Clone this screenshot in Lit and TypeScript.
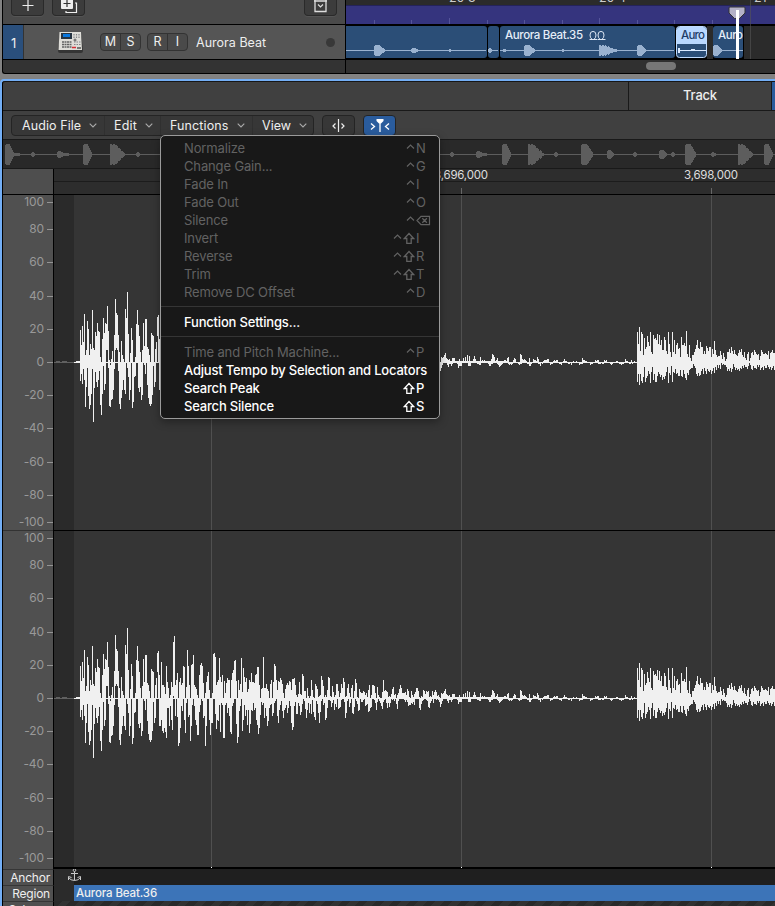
import { LitElement, html, svg, css } from "lit";
import { customElement } from "lit/decorators.js";

// Peak pairs (above, below the axis) for consecutive pixel columns.
const HIT_A = `32,19 17,12 36,22 20,7 48,18 7,45 12,25 41,6 33,34 7,47 18,43 13,32 52,7 14,60 12,26 30,10 26,20 39,25 31,18 30,9 5,43 -1,53 23,32 44,4 29,28 39,22 38,-12 56,-12 31,6 2,44
-3,45 3,38 11,37 0,28 27,7 63,-12 49,-14 47,-12 27,9 10,42 -1,47 21,36 7,28 3,18 0,28 53,32 44,0 70,6 28,15 0,38 9,28 34,0 22,46 0,40 0,15 5,14 38,0 52,0 37,26 26,30
10,25 0,38 12,33 39,1 16,3 43,12 43,1 15,23 13,36 7,42 0,44 29,42 27,33 26,4 -1,25 13,20 20,1 45,-26 47,0 23,28 -1,28 36,22 13,33 13,35 11,30 4,34 32,40 16,10 10,10 0,28
3,8 16,22 11,32 56,-2 62,0 13,18 18,1 25,19 -1,48 16,45 20,30 13,8 15,13 32,1 31,22 0,35 11,5 48,0 32,19 13,17 0,43 33,28 34,7 43,1 13,8 11,22 9,27 3,37 -1,37 23,14
33,7 35,0 32,3 15,20 -1,18 5,48 16,28 22,0 26,1 8,22 -1,37 0,25 5,25 44,1 45,0 41,16 13,31 16,22 18,23 40,7 21,34 16,5 23,7 0,40 17,40 5,7 15,5 20,15 18,10 18,18
0,34 18,36 25,8 28,5 37,1 38,1 17,26 0,45 18,39 8,13 14,8 40,1 6,33 30,22 21,7 16,18 20,12 6,27 9,12 18,35 16,26 25,12 16,13 16,5 15,12 23,10 24,22 31,27 31,36 13,30
0,17 9,4 10,7 41,5 10,20 10,10 14,18 9,28 7,23 0,10 14,7 18,6 0,18 16,15 34,5 32,3 18,1 8,18 17,25 16,12 20,7 18,3 14,13 5,20 0,12 9,10 13,7 15,15 13,10 17,3 16,8
8,25 19,32 19,29 20,8 13,4 3,16 1,16 4,5 16,8 4,17 3,14 24,6 22,0 7,3 7,11 0,20 10,12 2,5 0,15 2,6 18,16 8,2 1,14 0,19 14,22 12,3 9,6 1,15 2,25 3,14
22,3 18,0 12,7 1,5 3,22 1,20 8,10 21,2 20,2 2,3 1,9 12,5 6,2 1,12 3,6 14,9 14,0 7,11 1,10 5,9 14,2 10,0 20,0 16,4 1,20 2,15 10,3 14,0 5,9 1,5
10,1 13,15 0,16 7,9 19,0 15,3 1,6 0,13 9,12 6,0 5,4 5,4 7,2 6,1 3,8 5,7 1,6 8,14 13,13 0,10 3,9 13,1 13,0 12,2 5,5 0,12 11,4 3,0 1,3 0,5
0,8 6,11 18,4 7,2 8,0 7,5 6,10 1,5 2,9 1,5 4,0 9,2 11,0 3,3 4,0 0,6 3,11 5,3 9,1 13,0 10,0 5,0 5,1 5,2 6,4 3,2 9,4 7,8 1,7 0,7
7,5 3,6 1,4 4,7 6,1 10,0 10,1 7,0 1,10 0,12 2,6 1,3 8,2 7,0 4,0 7,2 6,3 7,9 1,10 2,5 1,3 7,1 3,5 6,1 8,0 6,2 2,1 3,2 1,4 0,9
5,6 4,3 5,0 7,0 9,0 4,1 3,3 2,5 3,2 1,2`;

const HIT_B = `30,20 18,12 35,23 11,12 30,19 28,21 7,15 24,5 13,20 15,16 26,14 20,9 16,12 30,21 10,10 8,5 27,18 23,12 24,20 22,20 28,14 18,10 27,12 17,15 22,13 12,18 12,15 25,17 22,14 11,10
8,5 30,21 18,11 10,13 5,4 30,20 10,10 22,11 8,7 17,12 19,11 13,14 14,14 5,8 25,14 17,15 17,8 19,12 16,16 31,18 8,11 5,13 17,8 4,7 1,6 7,6 7,2 10,4 13,6 17,12
22,14 14,11 13,14 20,13 15,9 15,7 8,12 11,6 8,9 16,12 14,7 11,9 15,10 15,8 5,12 13,9 8,6 21,11 12,5 7,8 5,3 6,6 6,3 11,7 7,1 3,3 9,2 5,3 1,3 3,5
10,9 10,7 13,9 9,6 15,10 11,7 8,2 12,5 8,8 7,6 6,8 9,7 12,9 10,6 13,7 7,4 5,6 10,3 4,5 2,5 8,7 10,4 1,1 4,3 9,7 10,8 7,4 12,6 10,6 8,7
7,3 8,5 2,3 6,8 12,6 10,5 8,8 8,4 9,6 8,6 7,3 11,5 3,7 9,5 10,8 12,6 9,4 9,8`;

type Peak = [number, number];
const parse = (s: string): Peak[] => s.trim().split(/\s+/).map((p) => p.split(",").map(Number) as Peak);

// Small bumps standing out of the quiet tail: offset in columns -> height.
const BUMPS: Record<number, number> = {
  2: 4, 8: 3, 14: 5, 16: 7, 18: 6, 23: 6, 29: 5, 40: 3, 41: 8, 42: 7, 43: 5, 46: 4, 56: 4, 57: 5, 63: 4, 64: 3,
  69: 8, 70: 7, 71: 3, 78: 4, 82: 3, 86: 5, 87: 3, 96: 3, 97: 3, 106: 2, 113: 3, 131: 4, 132: 2, 146: 2, 147: 2, 153: 2, 174: 3, 180: 2,
};

// Quiet tail between the two hits: small swings to either side of the axis.
function tail(n: number): Peak[] {
  const out: Peak[] = [];
  for (let i = 0; i < n; i++) {
    const env = 0.8 + 3.6 * Math.exp(-i / 75);
    const r = Math.abs(Math.sin(i * 12.9898) * 43758.5453) % 1;
    const v = Math.sin(i * 0.62) * 0.8 + (r - 0.5) * 1.1;
    out.push([
      Math.max(BUMPS[i] ?? 0, Math.round(Math.max(v, 0.2) * env)),
      Math.round(Math.max(-v, 0.1) * env * 1.15) + 1,
    ]);
  }
  return out;
}

const TAIL_START = 80 + parse(HIT_A).length;
const PEAKS: Peak[] = [...parse(HIT_A), ...tail(637 - TAIL_START), ...parse(HIT_B)];

const wavePath = (c: number) =>
  PEAKS.map(([a, b], i) => `M${26 + i} ${c - a}h1V${c + Math.max(b, -a + 1)}h-1z`).join("");

// Transient shape: quick attack, full body, tapering decay; long ones decay from early on.
function burst(x: number, c: number, w: number, h: number): string {
  const long = w > 13;
  const hold = long ? 0.3 : 0.45;
  let d = "";
  for (let i = 0; i < w; i++) {
    const t = i / w;
    const body = t < hold ? 1 : (1 - t) / (1 - hold);
    const a = Math.max(1, Math.round(h * body - (i === 0 && !long ? 1 : 0) - (long && i % 3 === 2 ? 1 : 0)));
    d += `M${x + i} ${c - a}h1V${c + a + 1}h-1z`;
  }
  return d;
}

const OVERVIEW: [number, number, number][] = [
  [2, 9, 10], [11, 6, 1], [28, 4, 2], [54, 7, 3], [61, 5, 1], [80, 9, 10], [107, 15, 10], [133, 4, 2],
  [447, 4, 2], [473, 7, 3], [480, 4, 1], [499, 9, 10], [525, 16, 10], [551, 4, 2], [578, 12, 10], [604, 7, 4],
  [630, 4, 2], [656, 8, 4], [668, 4, 2], [682, 11, 10], [708, 5, 2], [735, 15, 10], [761, 9, 10],
];

const SCALE: [string, number][] = [
  ["100", 0], ["80", 13], ["60", 19], ["40", 20], ["20", 19], ["0", 19],
  ["-20", 19], ["-40", 19], ["-60", 20], ["-80", 19], ["-100", 13],
];

const chevron = html`<svg class="chev" width="8" height="5" viewBox="0 0 8 5"><path d="M.7.7 4 4 7.3.7" fill="none" stroke="#aaa" stroke-width="1.1"/></svg>`;
const caret = html`<svg class="caret" width="9" height="13" viewBox="0 0 9 13"><path d="M1 6.5 4.5 3 8 6.500" fill="none" stroke="currentColor" stroke-width="1.2"/></svg>`;
const shift = html`<svg class="shift" width="12" height="13" viewBox="0 0 12 13"><path d="M6 1.500 1.300 6.500H3.800V11.400H8.200V6.500H10.700Z" fill="none" stroke="currentColor" stroke-width="1.300"/></svg>`;
const erase = html`<svg width="15" height="13" viewBox="0 0 15 13"><path d="M5 2.3H13.5V10.7H5L1 6.5ZM6.3 4.3l4.6 4.5m0-4.5L6.3 8.8" fill="none" stroke="currentColor" stroke-width="1.2"/></svg>`;

interface Item { label: string; key?: string; ctrl?: boolean; shift?: boolean; on?: boolean; sep?: boolean }
const MENU: Item[] = [
  { label: "Normalize", key: "N", ctrl: true },
  { label: "Change Gain...", key: "G", ctrl: true },
  { label: "Fade In", key: "I", ctrl: true },
  { label: "Fade Out", key: "O", ctrl: true },
  { label: "Silence", key: "erase", ctrl: true },
  { label: "Invert", key: "I", ctrl: true, shift: true },
  { label: "Reverse", key: "R", ctrl: true, shift: true },
  { label: "Trim", key: "T", ctrl: true, shift: true },
  { label: "Remove DC Offset", key: "D", ctrl: true },
  { label: "", sep: true },
  { label: "Function Settings...", on: true },
  { label: "", sep: true },
  { label: "Time and Pitch Machine...", key: "P", ctrl: true },
  { label: "Adjust Tempo by Selection and Locators", on: true },
  { label: "Search Peak", key: "P", shift: true, on: true },
  { label: "Search Silence", key: "S", shift: true, on: true },
];

@customElement("functions-menu")
class FunctionsMenu extends LitElement {
  static styles = css`
    :host { display: block; box-sizing: border-box; width: 280px; height: 284px; padding-top: 3px; background: #181818;
      border: 1px solid #9a9a9a; border-radius: 5px; box-shadow: 0 3px 9px rgba(0,0,0,.35);
      font: 13px/18px Inter, "Liberation Sans", sans-serif; color: #626262; letter-spacing: -0.14px; }
    svg { display: block; flex: none; }
    .item { display: flex; height: 18px; padding: 0 8px 0 23px; white-space: nowrap; align-items: center; }
    .label { flex: 1; min-width: 0; }
    .on { color: #fff; font-weight: 500; letter-spacing: -0.19px; }
    .keys { display: flex; align-items: center; }
    .caret { margin-right: 1px; }
    .shift { margin-right: 1px; }
    .key { width: 15px; display: flex; }
    .sep { box-sizing: border-box; height: 12px; display: flex; align-items: flex-start; padding-top: 5px; }
    .sep::before { content: ""; flex: 1; height: 1px; background: #353535; }
  `;
  render() {
    return MENU.map((m) => m.sep
      ? html`<div class="sep"></div>`
      : html`<div class="item ${m.on ? "on" : ""}"><span class="label">${m.label}</span>
          ${m.key ? html`<span class="keys">${m.ctrl ? caret : ""}${m.shift ? shift : ""}<span class="key">${m.key === "erase" ? erase : m.key}</span></span>` : ""}
        </div>`);
  }
}

@customElement("app-root")
class AppRoot extends LitElement {
  static styles = css`
    :host { display: block; position: relative; width: 775px; height: 906px; overflow: hidden; background: #828282;
      font: 13px/16px Inter, "Liberation Sans", sans-serif; color: #eee; }
    * { box-sizing: border-box; }
    svg { display: block; flex: none; }
    .arrange { display: flex; height: 74px; margin-left: 2px; border-left: 1px solid #000; border-bottom: 1px solid #000; border-bottom-left-radius: 3px; background: #333; overflow: hidden; }
    .heads { width: 343px; border-right: 1px solid #000; }
    .tools { height: 24px; background: #4a4a4a; display: flex; align-items: flex-start; padding: 0 8px; }
    .tool { width: 33px; height: 16px; background: #3c3c3c; border: 1px solid #2a2a2a; border-top: 0; border-radius: 0 0 4px 4px; display: flex; justify-content: center; margin-right: 8px; box-shadow: 0 1px 0 #555; }
    .tool.last { margin: 0 0 0 auto; }
    .track { height: 36px; border-top: 1px solid #000; border-bottom: 1px solid #000; background: #555; display: flex; align-items: center; }
    .num { width: 21px; height: 34px; line-height: 36px; padding-left: 8px; background: #2a4f7c; border-right: 1px solid #333; }
    .inst { margin-left: 33px; }
    .pair { display: flex; height: 18px; width: 41px; border: 1px solid #333; border-radius: 4px; background: #4a4a4a; font-size: 12.5px; line-height: 16px; text-align: center; margin-left: 6px; }
    .pair.first { margin-left: 16px; }
    .pair span { flex: 1; }
    .pair span + span { border-left: 1px solid #333; }
    .name { margin-left: 8px; flex: 1; font-size: 12.5px; line-height: 18px; padding-top: 1px; letter-spacing: 0.02px; }
    .dot { width: 9px; height: 9px; border-radius: 50%; background: #383838; margin-right: 10px; }
    .lanes { flex: 1; }
    .editor { margin-top: 5px; height: 827px; border: 2px solid #73aef5; border-right: 0; border-bottom: 0; border-top-left-radius: 4px; background: #404040; }
    .inner { border-left: 1px solid #000; border-top: 1px solid #161616; height: 825px; border-top-left-radius: 3px; }
    .tabs { display: flex; height: 29px; justify-content: flex-end; border-bottom: 1px solid #191919; font-weight: 500; letter-spacing: -0.2px; }
    .tab { width: 144px; border: 1px solid #191919; border-width: 0 1px; line-height: 27px; text-align: center; }
    .tab.blue { width: 3px; border: 0; background: #2a5c9d; }
    .bar { display: flex; height: 29px; padding: 4px 8px 0; border-bottom: 1px solid #191919; }
    .menus { display: flex; width: 303px; height: 21px; background: #373737; border: 1px solid #242424; border-radius: 4px; font-size: 12.5px; line-height: 20px; }
    .m { display: flex; align-items: center; justify-content: space-between; padding: 0 8px 0 10px; border-left: 1px solid #303030; letter-spacing: 0.03px; }
    .m:first-child { border-left: 0; }
    .w1 { width: 92px; letter-spacing: 0.08px; padding-right: 7px; } .w2 { width: 56px; padding: 0 7px 0 9px; letter-spacing: 0.2px; } .w3 { width: 92px; padding: 0 7px 0 9px; letter-spacing: 0.12px; } .w4 { width: 61px; padding: 0 6px 0 9px; letter-spacing: 0.05px; }
    .btn { width: 33px; height: 21px; margin-left: 8px; background: #373737; border: 1px solid #242424; border-radius: 4px; display: flex; align-items: center; justify-content: center; }
    .btn.blue { background: #2a5c9d; }
    .overview { height: 29px; background: #292929; border-bottom: 1px solid #191919; }
    .ruler { display: flex; height: 26px; border-bottom: 1px solid #000; }
    .corner { width: 51px; background: #4e4e4e; border-right: 1px solid #000; }
    .time { flex: 1; background: linear-gradient(#2d2d2d 0 12px, #1c1c1c 12px 13px, #2d2d2d 13px); }
    .body { display: flex; height: 674px; }
    .scale { width: 51px; border-right: 1px solid #000; background: #505050; color: #999; font-size: 12px; letter-spacing: -0.1px; }
    .chan { height: 336px; overflow: hidden; }
    .chan:first-child { border-bottom: 1px solid #333; }
    .mark { display: flex; height: 14px; line-height: 14px; align-items: center; justify-content: flex-end; }
    .mark::after { content: ""; width: 6px; height: 1px; background: #949494; margin-left: 3px; }
    .row { display: flex; height: 16px; font-size: 12px; line-height: 16px; }
    .lab { width: 51px; padding-right: 3px; text-align: right; background: #505050; border-right: 1px solid #000; border-top: 1px solid #363636; white-space: nowrap; letter-spacing: -0.22px; line-height: 15px; }
    .pre { width: 20px; background: #2b2b2b; }
    .fill { flex: 1; background: #1d1d1d; }
    .fill.region { background: #3c74b8; font-size: 11.5px; font-weight: 500; letter-spacing: -0.12px; padding-left: 2px; }
    .fill.hatch { background: repeating-linear-gradient(135deg, #292929 0 6px, #323232 6px 12px); }
    .menu { position: absolute; left: 160px; top: 135px; }
  `;

  private region(x: number, w: number) {
    return svg`<rect x=${x} y="26" width=${w} height="32" rx="3" fill="#2b4e77"/>`;
  }

  private lanes() {
    return html`<svg width="429" height="73" viewBox="0 0 429 73" font-family="Inter, sans-serif" font-size="11.5" font-weight="500" fill="#e5edf8">
      <rect width="429" height="73" fill="#2b2b2b"/>
      <g font-size="12.500" font-weight="400" fill="#ccc"><text x="103" y="1.500">20 3</text><text x="253" y="1.500">20 4</text><text x="408" y="1.500">21</text></g>
      <rect y="5" width="429" height="19" fill="#35347e"/><rect y="5" width="429" height="1" fill="#24235a"/>
      <path d="M28.5 20v4M65.5 20v4M103.5 18v6M141.5 20v4M178.5 20v4M216.5 20v4M253.5 18v6M291.5 20v4M328.5 20v4M366.5 20v4" stroke="#55549a"/>
      <rect y="24" width="429" height="2" fill="#000"/><path d="M404.5 0v59" stroke="#555" opacity=".6"/>
      <rect y="26" width="398" height="33" fill="#000"/>
      ${this.region(-5, 146)}${this.region(142, 11)}${this.region(154, 175)}
      <rect x="361" y="26" width="6" height="33" fill="#2b2b2b"/>
      <rect x="330.5" y="26.5" width="30" height="31" rx="3" fill="#2b4e77" stroke="#c0dcff"/>
      <path d="M331 44V30q0-3 3-3h23q3 0 3 3v14z" fill="#b9d8ff"/>
      ${this.region(367, 30)}
      <g fill="#9ab2d0" shape-rendering="crispEdges">
        <path d="M0 50h140v1H0zM143 50h9v1h-9zM154 50h174v1H154zM367 50h30v1h-30z"/>
        <path d=${burst(28, 50, 11, 5) + burst(65, 50, 7, 2) + burst(103, 50, 2, 1) + burst(142, 50, 4, 2) + burst(157, 50, 3, 1) + burst(178, 50, 11, 5) + burst(216, 50, 2, 1) + burst(253, 50, 18, 5) + burst(291, 50, 9, 5) + burst(367, 50, 9, 5)}></path>
      </g>
      <path d="M332 50h28v1h-28zM332 48h2v5h-2zM345 49h4v2h-4z" fill="#dbeaff"/>
      <text x="159" y="39" textLength="78">Aurora Beat.35</text>
      <path d="M243.500 39.500h7.500M246.200 39.500q-2.200-1.500-2.200-4.500a3 3.600 0 0 1 6 0q0 3-2.200 4.500M251.500 39.500h8M254.200 39.500q-2.200-1.500-2.200-4.500a3 3.600 0 0 1 6 0q0 3-2.200 4.500" fill="none" stroke="#dce6f4"/>
      <text x="335" y="39" textLength="24" fill="#1e3c66">Auro</text><text x="372" y="39" textLength="25">Auro</text>
      <rect y="59" width="429" height="1" fill="#000"/><rect y="60" width="429" height="13" fill="#303030"/>
      <rect x="300" y="62" width="30" height="8" rx="4" fill="#777"/>
      <path d="M384 7h14q1 0 1 1v5l-5.500 5.500h-5L383 13V8q0-1 1-1z" fill="#b4b1c8" stroke="#333"/>
      <rect x="390" y="10" width="3" height="49" fill="#fff"/>
    </svg>`;
  }

  private instrument() {
    return html`<svg class="inst" width="27" height="25" viewBox="0 0 27 25">
      <path d="M3 2h21l2 19q0 2-2 2H3q-2 0-2-2z" fill="#343434"/><path d="M2.500 2H24l1 18H1.500z" fill="#deddd8"/>
      <rect x="4" y="3" width="11" height="6" fill="#263442"/><rect x="6" y="4" width="7" height="3" fill="#0877df"/>
      <path d="M5 12h10M5 14.500h10M5 17h10" stroke="#626262" stroke-width="1.700" stroke-dasharray="2 .5"/>
      <path d="M17 4v4M19.500 4v4M22 4v4M17 12h7M17 14.500h7" stroke="#85888a" stroke-width="1.200" stroke-dasharray="1.500 1"/>
      <circle cx="18" cy="10" r="1.500" fill="#777"/><path d="M15 17.500h4" stroke="#d62e35" stroke-width="1.500"/><path d="M20 18h4" stroke="#555" stroke-width="1.500"/>
    </svg>`;
  }

  private wave() {
    return html`<svg width="721" height="674" viewBox="0 0 721 674" shape-rendering="crispEdges">
      <rect width="721" height="674" fill="#353535"/><rect width="20" height="672" fill="#2a2a2a"/>
      <path d="M157.500 0v672M407.500 0v672M657.500 0v672" stroke="#505050"/>
      <path d="M0 167h20v1H0zM0 503h20v1H0zM2 166h4v1H2zM8 166h5v1H8zM2 502h4v1H2zM8 502h5v1H8z" fill="#606060"/>
      <path d="M20 167.500h701M20 503.500h701" stroke="#f0f0f0"/>
      <path d="M22 166h4v2h-4zM22 502h4v2h-4z" fill="#f0f0f0"/>
      <path d=${wavePath(167)} fill="#f0f0f0"></path><path d=${wavePath(503)} fill="#f0f0f0"></path>
      <rect y="335" width="721" height="1" fill="#000"/><rect y="672" width="721" height="2" fill="#000"/>
      <path d="M157 672h1v1h-1zM407 672h1v1h-1zM657 672h1v1h-1z" fill="#fff"/>
    </svg>`;
  }

  private scale() {
    return html`<div class="chan">${SCALE.map(([t, gap]) => html`<div class="mark" style="margin-top:${gap}px">${t}</div>`)}</div>`;
  }

  render() {
    return html`
      <div class="arrange">
        <div class="heads">
          <div class="tools">
            <div class="tool"><svg width="12" height="12" viewBox="0 0 12 12"><path d="M6 0v11M.5 5.500h11" stroke="#eee" stroke-width="1.200"/></svg></div>
            <div class="tool"><svg width="18" height="14" viewBox="0 0 18 14"><rect x="1" y="-2" width="12" height="11" rx="1" fill="#eee"/><path d="M7 0v7M3.500 3.500h7" stroke="#333" stroke-width="1.200"/><path d="M15 3h1.500v9.500H6V11" fill="none" stroke="#eee" stroke-width="1.200"/></svg></div>
            <div class="tool last"><svg width="13" height="13" viewBox="0 0 13 13"><path d="M1 0v11.500h11V0M0 1h13" fill="none" stroke="#ddd" stroke-width="1.300"/><path d="M4 4.500l2.500 2.500L9 4.500" fill="none" stroke="#ddd" stroke-width="1.200"/></svg></div>
          </div>
          <div class="track">
            <div class="num">1</div>${this.instrument()}
            <div class="pair first"><span>M</span><span>S</span></div><div class="pair"><span>R</span><span>I</span></div>
            <div class="name">Aurora Beat</div><div class="dot"></div>
          </div>
        </div>
        <div class="lanes">${this.lanes()}</div>
      </div>
      <div class="editor"><div class="inner">
        <div class="tabs"><div class="tab">Track</div><div class="tab blue"></div></div>
        <div class="bar">
          <div class="menus">
            <div class="m w1">Audio File ${chevron}</div><div class="m w2">Edit ${chevron}</div>
            <div class="m w3">Functions ${chevron}</div><div class="m w4">View ${chevron}</div>
          </div>
          <div class="btn"><svg width="15" height="13" viewBox="0 0 15 13"><path d="M7.500 0v13M4.500 4.500 2 7l2.500 2.500M10.500 4.500 13 7l-2.500 2.500" fill="none" stroke="#eee" stroke-width="1.200"/></svg></div>
          <div class="btn blue"><svg width="20" height="13" viewBox="0 0 20 13"><path d="M10 1v12M1 4.500 4.500 7.500 1 10.500M19 4.500 15.500 7.500 19 10.500" fill="none" stroke="#fff" stroke-width="1.300"/><path d="M6.500 0h7v2l-2.500 2.500H9L6.500 2z" fill="#fff"/></svg></div>
        </div>
        <div class="overview"><svg width="772" height="28" viewBox="0 0 772 28" shape-rendering="crispEdges" fill="#5d5d5d"><path d="M2 14h770v1H2z"/><path d=${OVERVIEW.map(([x, w, h]) => burst(x, 14, w, h)).join("")}></path></svg></div>
        <div class="ruler"><div class="corner"></div><div class="time">
          <svg width="721" height="25" viewBox="0 0 721 25" font-family="Inter, sans-serif" font-size="11.5" fill="#ddd"><text x="380" y="10" textLength="54">3,696,000</text><text x="630" y="10" textLength="54">3,698,000</text><path d="M407.500 19v6M657.500 19v6" stroke="#666"/></svg>
        </div></div>
        <div class="body"><div class="scale">${this.scale()}${this.scale()}</div>${this.wave()}</div>
        <div class="row"><div class="lab">Anchor</div>
          <svg width="721" height="16" viewBox="0 0 721 16"><rect width="721" height="16" fill="#1f1f1f"/><rect width="20" height="16" fill="#2b2b2b"/><g fill="none" stroke="#c8c8c8"><circle cx="20.500" cy="1.200" r="1.300"/><path d="M20.500 2.500v9M17 4.500h7M14.500 8.500q2 3 6 3t6-3M14.500 11V7.500l3 1M26.500 11V7.500l-3 1"/></g></svg></div>
        <div class="row"><div class="lab">Region</div><div class="pre"></div><div class="fill region">Aurora Beat.36</div></div>
        <div class="row"><div class="lab">S. Loop</div><div class="fill hatch"></div></div>
      </div></div>
      <functions-menu class="menu"></functions-menu>`;
  }
}
